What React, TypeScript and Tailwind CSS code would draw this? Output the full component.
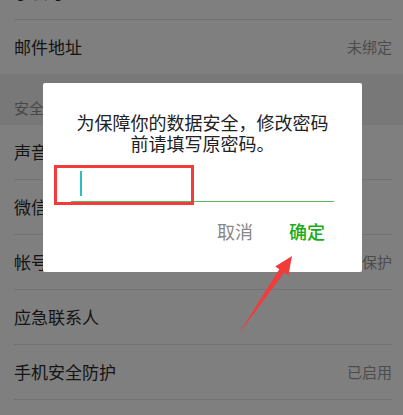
import React from 'react';

const FONT = '"Noto Sans CJK SC", "Noto Sans", sans-serif';

interface RowProps {
  label?: string;
  value?: string;
  divider?: boolean;
}

const Row: React.FC<RowProps> = ({ label, value, divider = true }) => (
  <div>
    <div className="h-[54px] flex items-center justify-between pl-[14px] pr-[11px]">
      {label && <span className="text-[17px] text-[#2a2a2a]">{label}</span>}
      {value && <span className="text-[15px] text-[#999]">{value}</span>}
    </div>
    {divider && <div className="h-px bg-[#e6e6e6] ml-[14px] mr-[11px]" />}
  </div>
);

export default function App() {
  return (
    <div className="relative w-[403px] h-[415px] overflow-hidden bg-white" style={{ fontFamily: FONT }}>
      {/* 设置列表 */}
      <div className="-mt-[35px]">
        <Row label="手机号" />
        <Row label="邮件地址" value="未绑定" divider={false} />
        <div className="h-[51px] bg-[#f0f0f0] flex items-end pl-[14px] pb-[8px]">
          <span className="text-[15px] leading-[18px] text-[#909090]">安全</span>
        </div>
        <Row label="声音锁" />
        <Row label="微信安全中心" />
        <Row label="帐号保护" value="已保护" />
        <Row label="应急联系人" />
        <Row label="手机安全防护" value="已启用" />
        <Row divider={false} />
      </div>

      {/* 遮罩 */}
      <div className="absolute inset-0 bg-black/50" />

      {/* 对话框 */}
      <div className="absolute left-[43px] top-[83px] w-[319px] h-[189px] bg-white rounded-[2px] flex flex-col">
        <p className="pt-[29px] text-center text-[18px] leading-[21px] text-[#222]">
          为保障你的数据安全，修改密码
          <br />
          前请填写原密码。
        </p>
        <div className="mt-[11px] mx-[28px] h-[37px] border-b border-[#5cb85c] relative">
          <div className="absolute left-[9px] top-[6px] w-[1.5px] h-[25px] bg-[#2bbcc4]" />
        </div>
        <div className="flex justify-end items-center mt-[17px] pr-[37px] gap-[36px] text-[18px] leading-[24px]">
          <span className="text-[#888]">取消</span>
          <span className="text-[#1aad19] font-medium">确定</span>
        </div>
        {/* 标注框 */}
        <div className="absolute left-[11px] top-[82px] w-[140px] h-[40px] border-[3px] border-[#f23b3b]" />
      </div>

      {/* 标注箭头 */}
      <svg className="absolute inset-0" width="403" height="415" viewBox="0 0 403 415">
        <polygon
          points="292,256 288.4,275.4 284.3,272.6 238,335 279.3,269.2 275.2,266.4"
          fill="#f23b3b"
        />
      </svg>
    </div>
  );
}
